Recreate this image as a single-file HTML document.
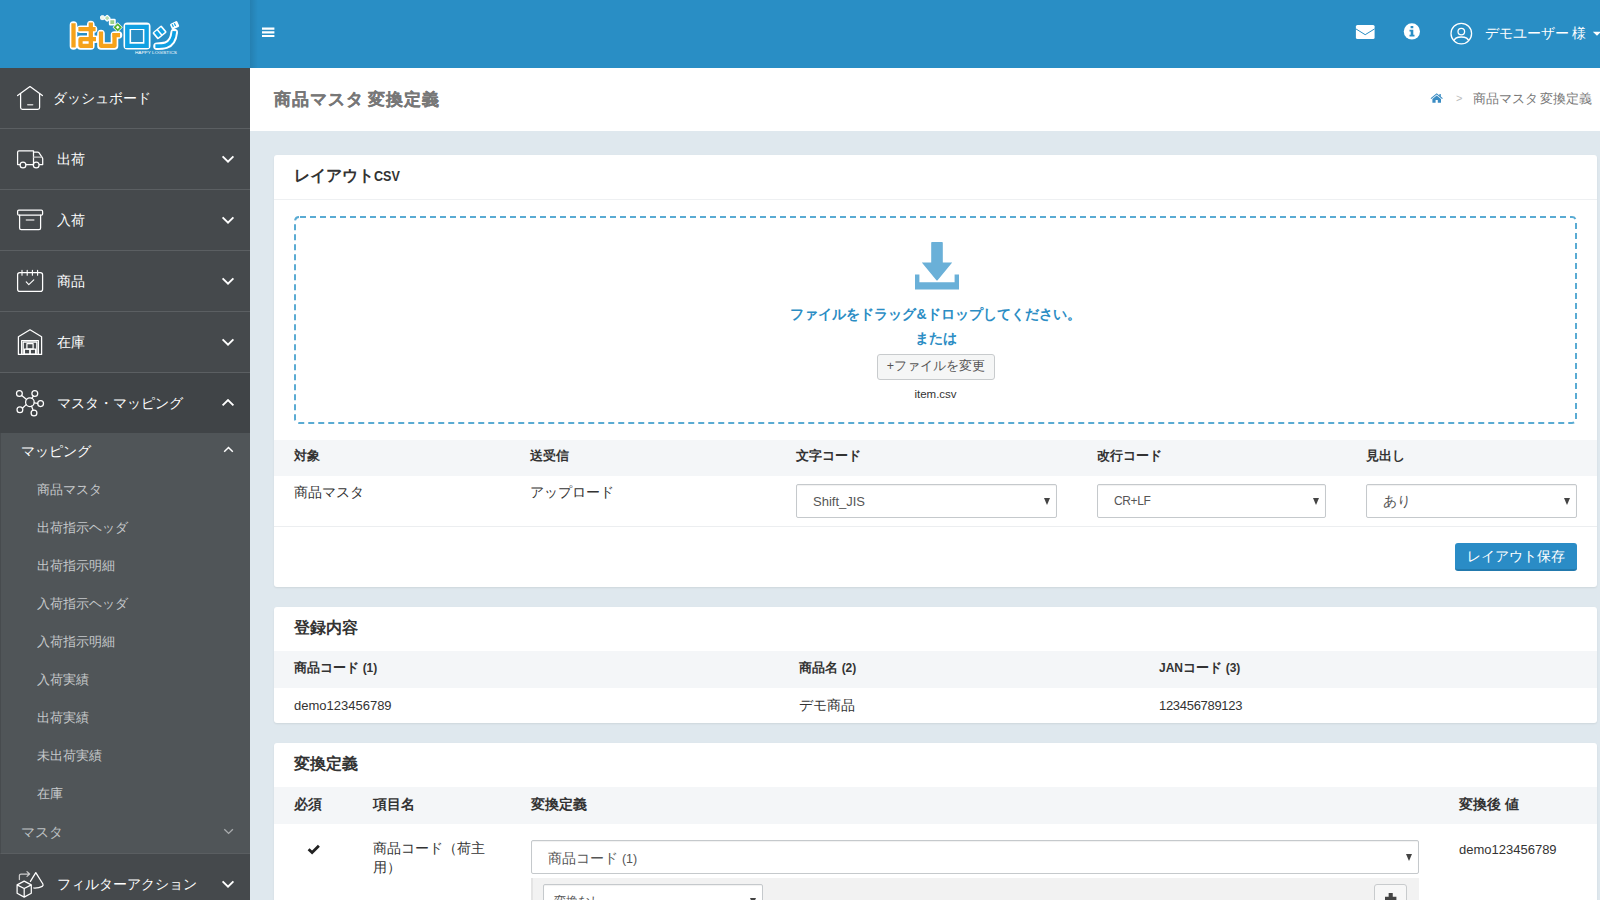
<!DOCTYPE html>
<html lang="ja"><head><meta charset="utf-8"><title>商品マスタ 変換定義</title>
<style>
*{box-sizing:border-box;margin:0;padding:0}
html,body{width:1600px;height:900px;overflow:hidden;background:#dfe8ee;font-family:"Liberation Sans",sans-serif;font-size:14px;color:#333}
.abs{position:absolute;white-space:nowrap}
#hdr{position:absolute;left:0;top:0;width:1600px;height:68px;background:#298ec5}
#hdrshadow{position:absolute;left:250px;top:0;width:8px;height:68px;background:linear-gradient(90deg,rgba(0,0,0,.10),rgba(0,0,0,0))}
#side{position:absolute;left:0;top:68px;width:250px;height:832px;background:#45494c}
.mi{position:absolute;left:0;width:250px;height:61px;border-bottom:1px solid #5b5f62}
.mi .t{position:absolute;left:57px;top:0;line-height:60px;color:#fff;font-size:14px;white-space:nowrap}
.mi svg.ic{position:absolute}
.mi svg.ch{position:absolute;left:221px;top:26px}
#sub{position:absolute;left:0;top:365px;width:250px;height:421px;background:#505558;border-left:1px solid #474b4e;border-bottom:1px solid #5a5e61}
.sh{position:absolute;left:21px;color:#fff;font-size:14px;white-space:nowrap;line-height:20px}
.si{position:absolute;left:36px;color:#c6c9cb;font-size:13px;white-space:nowrap;line-height:18px}
#tbar{position:absolute;left:250px;top:68px;width:1350px;height:63px;background:#fff}
.card{position:absolute;left:274px;width:1323px;background:#fff;border-radius:3px;box-shadow:0 1px 2px rgba(0,0,0,.08)}
.ct{position:absolute;left:20px;font-size:16px;font-weight:bold;color:#333;white-space:nowrap;line-height:20px}
.th{position:absolute;left:0;width:1323px;background:#f4f6f8}
.h{position:absolute;font-weight:bold;font-size:13px;color:#333;white-space:nowrap;line-height:18px}
.n{font-size:12px}
.d{position:absolute;font-size:14px;color:#333;white-space:nowrap;line-height:18px}
.sel{position:absolute;height:34px;border:1px solid #c5c9cc;border-radius:2px;background:#fff;box-shadow:inset 0 1px 1px rgba(0,0,0,.06)}
.sel span{position:absolute;left:16px;top:0;line-height:33px;font-size:13px;color:#555;white-space:nowrap}
.sel i{position:absolute;right:6px;top:13px;width:0;height:0;border-left:3.5px solid transparent;border-right:3.5px solid transparent;border-top:7px solid #444}
</style></head><body>
<div id="hdr"></div><div id="hdrshadow"></div>
<svg class="abs" style="left:60px;top:10px" width="130" height="50" viewBox="60 10 130 50">
<g fill="none" stroke-linecap="round" stroke-linejoin="round">
<g stroke="#fff" stroke-width="7.6">
<path d="M73.5 25V46M80.5 29.2H93.5M90.8 24.5V46M95.5 39.2H80.5V46H90.8M101 33.5V46H114.5V35H118.5"/>
<path d="M127.3 26.3H146.7V45.8H127.3Z"/>
<path d="M174.2 32.5C173.6 38 171 43.6 166 45.2C163 46.1 160 46.2 157 46.2"/>
</g>
<g stroke="#f6a21a" stroke-width="4.3" stroke-linecap="butt">
<path d="M73.5 23.2V47.6M78.4 29.2H95.6M90.8 22.6V48M96 39.2H80.5V45.8H93M101 31.5V45.8H114.5V33.5M112.2 35.2H120"/>
</g>
<g stroke="#10a0e2" stroke-width="4.4" stroke-linecap="butt" stroke-linejoin="miter">
<path d="M127.3 26.9H146.6V45.9H127.3Z"/>
<path stroke-width="3.7" d="M174.4 31.2C173.8 38 171 43.6 166 45.2C163 46.1 160 46.2 155.4 46.2"/>
</g>
</g>
<g transform="rotate(-40 159.6 32.4)"><rect x="153.6" y="27.9" width="12" height="9" rx="1.4" fill="#fff"/><rect x="155.2" y="29.3" width="3.6" height="6.2" fill="#10a0e2"/><rect x="160.3" y="29.3" width="3.6" height="6.2" fill="#10a0e2"/></g>
<g transform="rotate(-25 174.5 25.3)"><rect x="170.6" y="22.2" width="8" height="6.2" rx="1.2" fill="#fff"/><rect x="172.2" y="23.4" width="1.2" height="3" fill="#10a0e2"/><rect x="174.6" y="23.4" width="1.2" height="3" fill="#10a0e2"/></g>
<rect x="100.6" y="15.8" width="3.8" height="3.8" rx="1" fill="#eef6ea" stroke="#fff" stroke-width="1"/>
<rect x="105" y="16" width="4.4" height="4.4" rx=".8" fill="#b9deb0" stroke="#fff" stroke-width="1.2" transform="rotate(45 107.2 18.2)"/>
<rect x="109.6" y="19.4" width="5.4" height="5.4" rx=".6" fill="#9ad08a" stroke="#fff" stroke-width="1.5"/>
<rect x="115.2" y="24.8" width="5" height="5" fill="#fff" stroke="#fff" stroke-width="2.2" transform="rotate(45 117.7 27.3)"/>
<rect x="115.6" y="25.2" width="4.2" height="4.2" fill="#fff" stroke="#52b330" stroke-width="1.7" transform="rotate(45 117.7 27.3)"/>
<text x="135" y="54.3" font-family="Liberation Sans, sans-serif" font-size="3.9" fill="#fff" textLength="42" lengthAdjust="spacingAndGlyphs">HAPPY LOGISTICS</text>
</svg>
<svg class="abs" style="left:262px;top:27px" width="13" height="11" viewBox="0 0 13 11"><path fill="#fff" d="M0 .6h12.4v2.1H0zM0 4.3h12.4v2.1H0zM0 8h12.4v2.1H0z"/></svg>
<svg class="abs" style="left:1355px;top:24px" width="20" height="16" viewBox="0 0 20 16"><rect x=".9" y="1.1" width="18.7" height="14" rx="1.5" fill="#fff"/><path d="M.9 4.9L10.2 10.7L19.6 4.9" fill="none" stroke="#298ec5" stroke-width="1"/></svg>
<svg class="abs" style="left:1403px;top:23px" width="18" height="17" viewBox="0 0 18 17"><circle cx="8.9" cy="8.4" r="8.1" fill="#fff"/><path fill="#298ec5" d="M7.6 3h2.7v2.3H7.6zM6.5 6.7h3.8v5h1.2v1.9H6.5v-1.9h1.2V8.6H6.5z"/></svg>
<svg class="abs" style="left:1449px;top:21px" width="25" height="25" viewBox="0 0 25 25"><defs><clipPath id="uc"><circle cx="12.3" cy="12.5" r="10.4"/></clipPath></defs><circle cx="12.3" cy="12.6" r="10.3" fill="none" stroke="#fff" stroke-width="1.3"/><circle cx="12.3" cy="10.6" r="3.3" fill="none" stroke="#fff" stroke-width="1.3"/><path d="M4.6 20.8C5.2 17.2 8 16 12.3 16S19.4 17.2 20 20.8" fill="none" stroke="#fff" stroke-width="1.3" clip-path="url(#uc)"/></svg>
<div class="abs" id="uname" style="left:1484.5px;top:23px;line-height:20px;font-size:14px;color:#fff">デモユーザー 様</div>
<svg class="abs" style="left:1592px;top:31px" width="8" height="6" viewBox="0 0 8 6"><path d="M.8 .8H9L5 4.8z" fill="#fff"/></svg>
<div id="side">
<div class="mi" style="top:0"><svg class="ic" style="left:14px;top:14px" width="32" height="32" viewBox="14 82 32 32"><g fill="none" stroke="#fff" stroke-width="1.25" stroke-linejoin="round" stroke-linecap="round"><path d="M17.6 95.6L30 86.6L42.4 95.6"/><path d="M20.6 93.6V107.6Q20.6 109.4 22.4 109.4H37.8Q39.6 109.4 39.6 107.6V93.6"/><path d="M27.8 104.8H32.6" stroke="#ccc" stroke-width="1.6"/></g></svg><div class="t" style="left:53px">ダッシュボード</div></div>
<div class="mi" style="top:61px"><svg class="ic" style="left:14px;top:14px" width="32" height="32" viewBox="14 143 32 32"><g fill="none" stroke="#fff" stroke-width="1.25" stroke-linejoin="round" stroke-linecap="round"><path d="M19.8 164.6H17.6V152.2Q17.6 150.8 19 150.8H33.5V164.6H26.2"/><path d="M33.5 152H37.6Q38.4 152 38.9 152.7L42.3 157.6Q42.7 158.2 42.7 159V164.6H39.5M33.5 164.6H33"/><path d="M33.5 157H41.5" stroke="#ccc"/><circle cx="23" cy="164.9" r="2.9"/><circle cx="36.2" cy="164.9" r="2.9"/></g></svg><div class="t">出荷</div><svg class="ch" width="14" height="9" viewBox="0 0 14 9"><path d="M1.6 1.4L7 6.7L12.4 1.4" fill="none" stroke="#fff" stroke-width="1.9"/></svg></div>
<div class="mi" style="top:122px"><svg class="ic" style="left:14px;top:14px" width="32" height="32" viewBox="14 204 32 32"><g fill="none" stroke="#fff" stroke-width="1.25" stroke-linejoin="round" stroke-linecap="round"><rect x="17.6" y="210.2" width="25" height="4.9" rx="1.2"/><path d="M19.6 215.2V228Q19.6 229.6 21.2 229.6H39Q40.6 229.6 40.6 228V215.2"/><path d="M26.4 220H33.8" stroke="#ccc" stroke-width="1.5"/></g></svg><div class="t">入荷</div><svg class="ch" width="14" height="9" viewBox="0 0 14 9"><path d="M1.6 1.4L7 6.7L12.4 1.4" fill="none" stroke="#fff" stroke-width="1.9"/></svg></div>
<div class="mi" style="top:183px"><svg class="ic" style="left:14px;top:14px" width="32" height="32" viewBox="14 265 32 32"><g fill="none" stroke="#fff" stroke-width="1.25" stroke-linejoin="round" stroke-linecap="round"><rect x="17.6" y="272.6" width="25" height="18.8" rx="2.2"/><path d="M22 270.2V275.2M27.2 270.2V275.2M32.4 270.2V275.2M37.6 270.2V275.2" stroke-width="1.1"/><path d="M26.2 281.8L28.8 284.6L33.8 279.8" stroke-width="1.1"/></g></svg><div class="t">商品</div><svg class="ch" width="14" height="9" viewBox="0 0 14 9"><path d="M1.6 1.4L7 6.7L12.4 1.4" fill="none" stroke="#fff" stroke-width="1.9"/></svg></div>
<div class="mi" style="top:244px"><svg class="ic" style="left:14px;top:14px" width="32" height="32" viewBox="14 326 32 32"><g fill="none" stroke="#fff" stroke-width="1.25" stroke-linejoin="round" stroke-linecap="round" stroke-width="1.1"><path d="M18.4 354.4V336.8L30 329.8L41.6 336.8V354.4Z"/><path d="M21.6 354.4V340.6H38.4V354.4M23.2 354.4V342.2H36.8V354.4"/><rect x="26.9" y="343.6" width="6.2" height="5.6"/><rect x="24.4" y="349.2" width="5.6" height="5"/><rect x="30" y="349.2" width="5.6" height="5"/></g></svg><div class="t">在庫</div><svg class="ch" width="14" height="9" viewBox="0 0 14 9"><path d="M1.6 1.4L7 6.7L12.4 1.4" fill="none" stroke="#fff" stroke-width="1.9"/></svg></div>
<div class="mi" style="top:305px;border-bottom:0;background:#404447"><svg class="ic" style="left:14px;top:14px" width="32" height="32" viewBox="14 387 32 32"><g fill="none" stroke="#fff" stroke-width="1.25" stroke-linejoin="round" stroke-linecap="round" stroke-width="1.1"><circle cx="29.9" cy="402.2" r="4.3"/><circle cx="19.4" cy="393.5" r="2.9"/><circle cx="34.8" cy="393.4" r="2.9"/><circle cx="40.6" cy="403.6" r="2.9"/><circle cx="34" cy="413" r="2.9"/><circle cx="19.9" cy="409.8" r="2.9"/><path d="M21.7 395.4L26.6 399.5M33.4 396L31.9 398.4M37.7 403.3L34.2 402.8M33.1 410.2L31.6 406.2M22.4 408.2L26.2 404.6"/></g></svg><div class="t">マスタ・マッピング</div><svg class="ch" width="14" height="9" viewBox="0 0 14 9"><path d="M1.6 6.4L7 1.1L12.4 6.4" fill="none" stroke="#fff" stroke-width="1.9"/></svg></div>
<div id="sub">
<div class="sh" style="top:8px;left:20px">マッピング</div>
<svg class="abs" style="left:221px;top:12px" width="13" height="9" viewBox="0 0 13 9"><path d="M2.2 6.7L6.5 2.5L10.8 6.7" fill="none" stroke="#fff" stroke-width="1.5"/></svg>
<div class="si" style="top:48px">商品マスタ</div>
<div class="si" style="top:86px">出荷指示ヘッダ</div>
<div class="si" style="top:124px">出荷指示明細</div>
<div class="si" style="top:162px">入荷指示ヘッダ</div>
<div class="si" style="top:200px">入荷指示明細</div>
<div class="si" style="top:238px">入荷実績</div>
<div class="si" style="top:276px">出荷実績</div>
<div class="si" style="top:314px">未出荷実績</div>
<div class="si" style="top:352px">在庫</div>
<div class="sh" style="top:389px;left:20px;color:#bec1c3">マスタ</div>
<svg class="abs" style="left:221px;top:394px" width="13" height="9" viewBox="0 0 13 9"><path d="M2.3 2.2L6.6 6.4L10.9 2.2" fill="none" stroke="#a9acae" stroke-width="1.3"/></svg>
</div>
<div class="mi" style="top:786px;border-bottom:0"><svg class="ic" style="left:14px;top:14px" width="32" height="32" viewBox="14 868 32 32"><g fill="none" stroke="#fff" stroke-width="1.25" stroke-linejoin="round" stroke-linecap="round" stroke-width="1.1"><path d="M24.2 881.1L31.3 884.9V893.3L24.2 897.1L17.1 893.3V884.9ZM17.1 884.9L24.2 888.5L31.3 884.9M24.2 888.5V897.1"/><path d="M19.4 879.6V875.6Q19.4 874 21 874H29.4M27 871.6L29.6 874L27 876.4" stroke="#ccc"/><path d="M30.4 881.4L35.8 872.6L42.9 884Q43.6 885.4 42.2 886.4Q39 888.2 33.8 888"/></g></svg><div class="t">フィルターアクション</div><svg class="ch" width="14" height="9" viewBox="0 0 14 9"><path d="M1.6 1.4L7 6.7L12.4 1.4" fill="none" stroke="#fff" stroke-width="1.9"/></svg></div>
</div>
<div id="tbar"></div>
<div class="abs" id="ptitle" style="left:274px;top:88px;line-height:24px;font-size:17px;letter-spacing:1px;font-weight:bold;color:#777;word-spacing:-2px;-webkit-text-stroke:.2px #777">商品マスタ 変換定義</div>
<svg class="abs" style="left:1430px;top:92px" width="14" height="12" viewBox="0 0 14 12"><path fill="#3a8cc3" d="M6.7 1.2L.6 6.2l.7.8L6.7 2.6l5.4 4.4.7-.8-2-1.7V1.9H9.4v1.5zM2.4 7v3.8h3.2V8h2.2v2.8H11V7L6.7 3.6z"/></svg>
<div class="abs" style="left:1456px;top:89px;line-height:18px;font-size:11px;color:#bbb">&gt;</div>
<div class="abs" id="bc" style="left:1472.5px;top:90px;line-height:18px;font-size:13px;color:#777;word-spacing:-1px">商品マスタ 変換定義</div>

<!-- card 1 -->
<div class="card" style="top:155px;height:432px">
<div class="ct" style="top:11px">レイアウト<span style="font-size:15px;display:inline-block;transform:scaleX(.84);transform-origin:0 50%">CSV</span></div>
<div style="position:absolute;left:0;top:44px;width:1323px;height:1px;background:#eef0f2"></div>
<svg class="abs" style="left:20px;top:61px" width="1283" height="208"><rect x="1" y="1" width="1281" height="206" rx="4" fill="none" stroke="#5aabd3" stroke-width="2" stroke-dasharray="6 4" stroke-dashoffset="-1"/></svg>
<svg class="abs" style="left:640px;top:87px" width="46" height="48" viewBox="0 0 46 48"><path fill="#6ab0d8" d="M17.2 .8Q17.2 0 18 0H28Q28.8 0 28.8 .8V20.4H38.2L23.6 38.2Q23 38.9 22.4 38.2L7.8 20.4H17.2Z"/><path fill="#6ab0d8" d="M1 32.4H5.4V40.2H40.6V32.4H45V47.4H1Z"/></svg>
<div class="abs dz" style="left:0;width:1323px;top:149px;text-align:center;font-size:14px;font-weight:bold;color:#2b8dc4;line-height:20px">ファイルをドラッグ&amp;ドロップしてください。</div>
<div class="abs dz" style="left:0;width:1323px;top:173px;text-align:center;font-size:14px;font-weight:bold;color:#2b8dc4;line-height:20px">または</div>
<div class="abs" style="left:603px;top:199px;width:118px;height:26px;border:1px solid #c8cbcd;border-radius:3px;background:#f5f6f6;text-align:center;font-size:12.5px;line-height:23px;color:#555">+ファイルを変更</div>
<div class="abs" style="left:0;width:1323px;top:231px;text-align:center;font-size:11.5px;line-height:16px;color:#333">item.csv</div>
<div class="th" style="top:285px;height:36px"></div>
<div class="h" style="left:20px;top:292px">対象</div>
<div class="h" style="left:256px;top:292px">送受信</div>
<div class="h" style="left:522px;top:292px">文字コード</div>
<div class="h" style="left:823px;top:292px">改行コード</div>
<div class="h" style="left:1092px;top:292px">見出し</div>
<div class="d" style="left:20px;top:328px">商品マスタ</div>
<div class="d" style="left:256px;top:328px">アップロード</div>
<div class="sel" style="left:522px;top:329px;width:261px"><span>Shift_JIS</span><i></i></div>
<div class="sel" style="left:823px;top:329px;width:229px"><span style="font-size:12px;letter-spacing:-.4px">CR+LF</span><i></i></div>
<div class="sel" style="left:1092px;top:329px;width:211px"><span style="font-size:14px">あり</span><i></i></div>
<div style="position:absolute;left:0;top:371px;width:1323px;height:1px;background:#eceef0"></div>
<div class="abs" style="left:1181px;top:388px;width:122px;height:28px;border-radius:3px;background:#2a8cc6;border-bottom:2px solid #2279ad;color:#fff;text-align:center;font-size:14px;line-height:26px">レイアウト保存</div>
</div>
<!-- card 2 -->
<div class="card" style="top:607px;height:116px">
<div class="ct" style="top:11px">登録内容</div>
<div class="th" style="top:44px;height:37px"></div>
<div class="h" style="left:20px;top:52px">商品コード <span class="n">(1)</span></div>
<div class="h" style="left:525px;top:52px">商品名 <span class="n">(2)</span></div>
<div class="h" style="left:885px;top:52px"><span class="n">JAN</span>コード <span class="n">(3)</span></div>
<div class="d" style="left:20px;top:90px;font-size:13px">demo123456789</div>
<div class="d" style="left:525px;top:89px">デモ商品</div>
<div class="d" style="left:885px;top:90px;font-size:13px;letter-spacing:-.3px">123456789123</div>
</div>
<!-- card 3 -->
<div class="card" style="top:743px;height:200px">
<div class="ct" style="top:11px">変換定義</div>
<div class="th" style="top:44px;height:37px"></div>
<div class="h" style="left:20px;top:52px;font-size:14px">必須</div>
<div class="h" style="left:99px;top:52px;font-size:14px">項目名</div>
<div class="h" style="left:257px;top:52px;font-size:14px">変換定義</div>
<div class="h" style="left:1185px;top:52px;font-size:14px">変換後 値</div>
<svg class="abs" style="left:32px;top:100px" width="15" height="12" viewBox="0 0 15 12"><path d="M2.6 6.3L6.1 9.6L12.9 2.8" fill="none" stroke="#222" stroke-width="2.8"/></svg>
<div class="d" style="left:99px;top:96px;line-height:19px">商品コード（荷主<br>用）</div>
<div class="sel" style="left:257px;top:97px;width:888px;height:34px"><span style="font-size:14px;top:1px">商品コード <span style="position:static;font-size:12.5px">(1)</span></span><i></i></div>
<div style="position:absolute;left:257px;top:135px;width:888px;height:70px;background:#f2f2f2;border-left:2px solid #e4e4e4"></div>
<div class="sel" style="left:269px;top:141px;width:220px;height:34px"><span style="left:9.5px;font-size:12px">変換なし</span><i></i></div>
<div class="abs" style="left:1100px;top:141px;width:33px;height:34px;border:1px solid #c8cbcd;border-radius:3px;background:#f7f7f7"><svg style="position:absolute;left:10.2px;top:8.1px" width="12" height="12" viewBox="0 0 12 12"><path d="M3.65 0H7.75V3.65H11.4V7.75H7.75V11.4H3.65V7.75H0V3.65H3.65Z" fill="#444"/></svg></div>
<div class="d" style="left:1185px;top:98px;font-size:13px">demo123456789</div>
</div>
</body></html>
